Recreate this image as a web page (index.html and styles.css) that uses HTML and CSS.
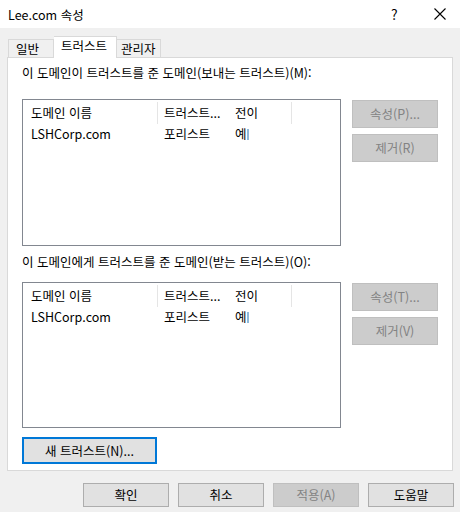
FILE: index.html
```html
<!DOCTYPE html>
<html lang="ko">
<head>
<meta charset="utf-8">
<link rel="stylesheet" href="styles.css">
</head>
<body>
<div class="window">
  <div class="titlebar">
    <span class="title">Lee.com 속성</span>
    <span class="help">?</span>
    <span class="close">
      <svg width="12" height="12" viewBox="0 0 12 12"><path d="M0.5 0.5 L11.5 11.5 M11.5 0.5 L0.5 11.5" stroke="#000" stroke-width="1.1" fill="none"/></svg>
    </span>
  </div>
  <div class="body">
    <div class="tabs">
      <div class="tab first">일반</div>
      <div class="tab active">트러스트</div>
      <div class="tab last">관리자</div>
    </div>
    <div class="panel">
      <div class="label">이 도메인이 트러스트를 준 도메인(보내는 트러스트)(M):</div>
      <div class="section">
        <div class="listbox">
          <div class="row header">
            <div class="c1 sep">도메인 이름</div>
            <div class="c2">트러스트...</div>
            <div class="c3 sep">전이</div>
          </div>
          <div class="row">
            <div class="c1">LSHCorp.com</div>
            <div class="c2">포리스트</div>
            <div class="c3">예<span class="caret"></span></div>
          </div>
        </div>
        <div class="sidebtns">
          <div class="btn disabled">속성(P)...</div>
          <div class="btn disabled">제거(R)</div>
        </div>
      </div>
      <div class="label second">이 도메인에게 트러스트를 준 도메인(받는 트러스트)(O):</div>
      <div class="section second">
        <div class="listbox">
          <div class="row header">
            <div class="c1 sep">도메인 이름</div>
            <div class="c2">트러스트...</div>
            <div class="c3 sep">전이</div>
          </div>
          <div class="row">
            <div class="c1">LSHCorp.com</div>
            <div class="c2">포리스트</div>
            <div class="c3">예<span class="caret"></span></div>
          </div>
        </div>
        <div class="sidebtns">
          <div class="btn disabled">속성(T)...</div>
          <div class="btn disabled">제거(V)</div>
        </div>
      </div>
      <div class="btn newtrust">새 트러스트(N)...</div>
    </div>
    <div class="footer">
      <div class="btn">확인</div>
      <div class="btn">취소</div>
      <div class="btn disabled">적용(A)</div>
      <div class="btn">도움말</div>
    </div>
  </div>
</div>
</body>
</html>
```

FILE: styles.css
```css
* { box-sizing: border-box; }
html, body {
  margin: 0;
  padding: 0;
}
body {
  width: 460px;
  height: 512px;
  overflow: hidden;
  font-family: "Noto Sans CJK KR", sans-serif;
  font-size: 12.5px;
  color: #000;
  background: #f0f0f0;
}
.window {
  width: 460px;
  height: 512px;
  display: flex;
  flex-direction: column;
}
.titlebar {
  height: 28px;
  background: #fff;
  display: flex;
  align-items: center;
  padding-left: 8px;
  flex: none;
}
.title {
  flex: 1;
}
.help {
  width: 12px;
  margin-right: 31px;
  font-size: 14px;
}
.close {
  width: 12px;
  height: 12px;
  margin-right: 14px;
  display: flex;
}
.body {
  flex: 1;
  padding: 8px 6px 0 7px;
  display: flex;
  flex-direction: column;
}
.tabs {
  display: flex;
  align-items: flex-end;
  height: 21px;
  padding-left: 1px;
  position: relative;
  z-index: 1;
}
.tab {
  height: 18px;
  border: 1px solid #d9d9d9;
  border-bottom: none;
  border-left: none;
  background: #f0f0f0;
  display: flex;
  align-items: center;
  white-space: nowrap;
  line-height: 16px;
}
.tab.first {
  border-left: 1px solid #d9d9d9;
  width: 46px;
  padding-left: 7px;
}
.tab.active {
  height: 22px;
  margin-bottom: -1px;
  background: #fff;
  width: 63px;
  padding-left: 7px;
  align-items: flex-start;
  padding-top: 1px;
}
.tab.last {
  width: 44px;
  padding-left: 4px;
}
.panel {
  width: 446px;
  height: 414px;
  background: #fff;
  border: 1px solid #d9d9d9;
  padding: 7px 0 0 14px;
  display: flex;
  flex-direction: column;
}
.label {
  height: 16px;
  line-height: 16px;
  white-space: nowrap;
}
.label.second {
  margin-top: 8px;
}
.section {
  display: flex;
  margin-top: 18px;
}
.section.second {
  margin-top: 12px;
}
.section.second .listbox {
  height: 146px;
}
.listbox {
  width: 319px;
  height: 147px;
  border: 1px solid #828790;
  background: #fff;
  padding-top: 2px;
}
.row {
  display: flex;
  height: 20px;
  align-items: center;
  line-height: 16px;
  white-space: nowrap;
}
.row.header {
  height: 22px;
}
.c1 { width: 135px; padding-left: 8px; }
.c2 { width: 71px; padding-left: 6px; }
.c3 { width: 63px; padding-left: 6px; display: flex; align-items: center; }
.header .sep {
  border-right: 1px solid #e5e5e5;
  height: 22px;
  display: flex;
  align-items: center;
}
.caret {
  display: inline-block;
  width: 2px;
  height: 11px;
  background: #8fb8d8;
}
.sidebtns {
  margin-left: 11px;
  display: flex;
  flex-direction: column;
  gap: 6px;
  padding-top: 1px;
}
.btn {
  width: 86px;
  height: 28px;
  border: 1px solid #adadad;
  background: #e1e1e1;
  display: flex;
  align-items: center;
  justify-content: center;
  white-space: nowrap;
  line-height: 16px;
}
.btn.disabled {
  background: #cccccc;
  border-color: #bfbfbf;
  color: #838383;
}
.newtrust {
  margin-top: 9px;
  width: 135px;
  height: 27px;
  border: 2px solid #0078d7;
}
.footer {
  display: flex;
  justify-content: flex-end;
  gap: 9px;
  margin-top: 12px;
}
.footer .btn {
  width: 86px;
  height: 24px;
}
```
